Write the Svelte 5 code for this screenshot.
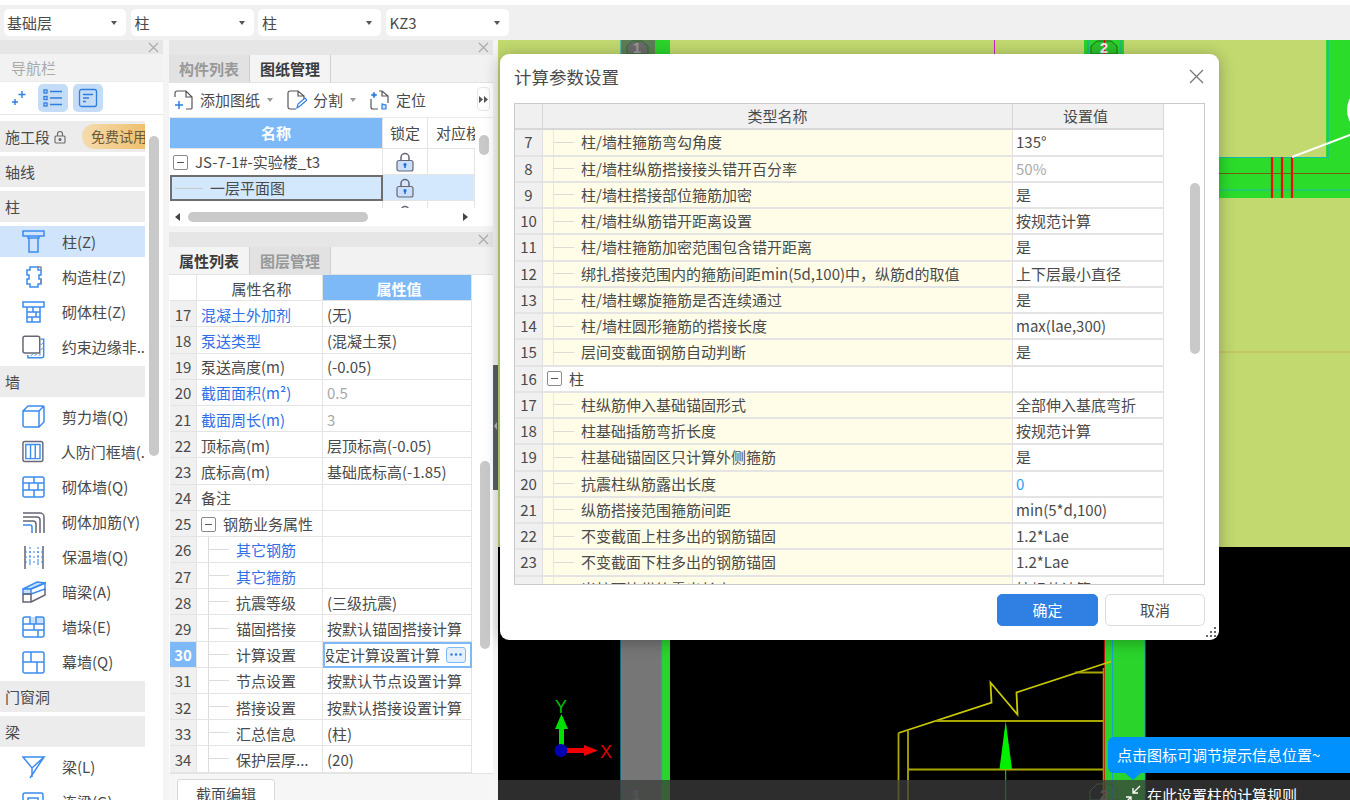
<script>
	const selects = ['基础层', '柱', '柱', 'KZ3'];

	const navItems = [
		{ kind: 'group', label: '施工段', trial: true },
		{ kind: 'group', label: '轴线' },
		{ kind: 'group', label: '柱' },
		{ label: '柱(Z)', icon: 'col', active: true },
		{ label: '构造柱(Z)', icon: 'gz' },
		{ label: '砌体柱(Z)', icon: 'qt' },
		{ label: '约束边缘非..', icon: 'ys' },
		{ kind: 'group', label: '墙' },
		{ label: '剪力墙(Q)', icon: 'jl' },
		{ label: '人防门框墙(.', icon: 'rf' },
		{ label: '砌体墙(Q)', icon: 'brick' },
		{ label: '砌体加筋(Y)', icon: 'jj' },
		{ label: '保温墙(Q)', icon: 'bw' },
		{ label: '暗梁(A)', icon: 'al' },
		{ label: '墙垛(E)', icon: 'qd' },
		{ label: '幕墙(Q)', icon: 'mq' },
		{ kind: 'group', label: '门窗洞' },
		{ kind: 'group', label: '梁' },
		{ label: '梁(L)', icon: 'beam' },
		{ label: '连梁(G)', icon: 'll' }
	];

	const props = [
		{ n: 17, name: '混凝土外加剂', value: '(无)', link: true },
		{ n: 18, name: '泵送类型', value: '(混凝土泵)', link: true },
		{ n: 19, name: '泵送高度(m)', value: '(-0.05)' },
		{ n: 20, name: '截面面积(m²)', value: '0.5', link: true, muted: true },
		{ n: 21, name: '截面周长(m)', value: '3', link: true, muted: true },
		{ n: 22, name: '顶标高(m)', value: '层顶标高(-0.05)' },
		{ n: 23, name: '底标高(m)', value: '基础底标高(-1.85)' },
		{ n: 24, name: '备注', value: '' },
		{ n: 25, name: '钢筋业务属性', value: '', root: true },
		{ n: 26, name: '其它钢筋', value: '', child: true, link: true },
		{ n: 27, name: '其它箍筋', value: '', child: true, link: true },
		{ n: 28, name: '抗震等级', value: '(三级抗震)', child: true },
		{ n: 29, name: '锚固搭接', value: '按默认锚固搭接计算', child: true },
		{ n: 30, name: '计算设置', value: '按设定计算设置计算', child: true, editing: true },
		{ n: 31, name: '节点设置', value: '按默认节点设置计算', child: true },
		{ n: 32, name: '搭接设置', value: '按默认搭接设置计算', child: true },
		{ n: 33, name: '汇总信息', value: '(柱)', child: true },
		{ n: 34, name: '保护层厚...', value: '(20)', child: true }
	];

	const params = [
		{ n: 7, name: '柱/墙柱箍筋弯勾角度', value: '135°' },
		{ n: 8, name: '柱/墙柱纵筋搭接接头错开百分率', value: '50%', tone: 'muted' },
		{ n: 9, name: '柱/墙柱搭接部位箍筋加密', value: '是' },
		{ n: 10, name: '柱/墙柱纵筋错开距离设置', value: '按规范计算' },
		{ n: 11, name: '柱/墙柱箍筋加密范围包含错开距离', value: '是' },
		{ n: 12, name: '绑扎搭接范围内的箍筋间距min(5d,100)中，纵筋d的取值', value: '上下层最小直径' },
		{ n: 13, name: '柱/墙柱螺旋箍筋是否连续通过', value: '是' },
		{ n: 14, name: '柱/墙柱圆形箍筋的搭接长度', value: 'max(lae,300)' },
		{ n: 15, name: '层间变截面钢筋自动判断', value: '是' },
		{ n: 16, name: '柱', value: '', section: true },
		{ n: 17, name: '柱纵筋伸入基础锚固形式', value: '全部伸入基底弯折' },
		{ n: 18, name: '柱基础插筋弯折长度', value: '按规范计算' },
		{ n: 19, name: '柱基础锚固区只计算外侧箍筋', value: '是' },
		{ n: 20, name: '抗震柱纵筋露出长度', value: '0', tone: 'blue' },
		{ n: 21, name: '纵筋搭接范围箍筋间距', value: 'min(5*d,100)' },
		{ n: 22, name: '不变截面上柱多出的钢筋锚固', value: '1.2*Lae' },
		{ n: 23, name: '不变截面下柱多出的钢筋锚固', value: '1.2*Lae' },
		{ n: 24, name: '当柱顶比纵筋露出长度', value: '按规范计算' }
	];
</script>

{#snippet lock()}
	<svg class="lock" width="18" height="20" viewBox="0 0 18 20">
		<path d="M5 9V5.500a4 4 0 0 1 8 0V9" fill="none" stroke="#667" stroke-width="1.500" />
		<rect x="1" y="8.500" width="16" height="10.500" rx="2" fill="#c9dffa" stroke="#667" stroke-width="1.200" />
		<circle cx="9" cy="12.500" r="1.600" fill="#1f6fd8" />
		<path d="M9 13v3" stroke="#1f6fd8" stroke-width="1.600" />
	</svg>
{/snippet}

{#snippet navIcon(name)}
	<svg width="24" height="24" viewBox="0 0 24 24" fill="none" stroke="#3b8cf0" stroke-width="1.500">
		{#if name === 'col'}
			<path d="M1 1h21v5H1z M6 6h11v2H6z M7 8v14h9V8" />
		{:else if name === 'gz'}
			<path d="M8 2h8v3h3v5h-2v4h2v5h-3v3H8v-3H5v-5h2v-4H5V5h3z" />
			<path d="M15 2h4v4M19 14v5" stroke="#889" />
		{:else if name === 'qt'}
			<path d="M1 2h21v5H1z M5 7v15h13V7 M5 12h13 M5 17h13 M11 7v5 M14 12v5 M10 17v5" />
		{:else if name === 'ys'}
			<path d="M18 18H3a2 2 0 0 1-2-2V3a2 2 0 0 1 2-2h13a2 2 0 0 1 2 2z" stroke="#667" />
			<path d="M19 4h3v17a2 2 0 0 1-2 2H6v-3" />
			<path d="M9 21l2-2M13 21l2-2M17 21l2-2M19 15l2-2M19 10l2-2" stroke-width="1" />
		{:else if name === 'jl'}
			<path d="M1 6h16v16H3a2 2 0 0 1-2-2z M1 6l5-5h15a1 1 0 0 1 1 1v15l-5 5 M17 6l5-5" />
		{:else if name === 'rf'}
			<rect x="1" y="1" width="21" height="21" rx="2" stroke="#667" />
			<path d="M4 4h15v15H4z M9 4v15 M14 4v15" />
		{:else if name === 'brick'}
			<rect x="1" y="2" width="21" height="20" rx="2" />
			<path d="M1 8h21 M1 15h21 M12 2v6 M7 8v7 M16 8v7 M12 15v7" />
		{:else if name === 'jj'}
			<path d="M1 3h17a4 4 0 0 1 4 4v16 M1 7h14a3 3 0 0 1 3 3v13 M1 11h10a3 3 0 0 1 3 3v9" stroke="#667" />
			<path d="M1 15h7a2 2 0 0 1 2 2v6" />
		{:else if name === 'bw'}
			<path d="M3 1v23 M21 1v23" stroke="#667" />
			<path d="M8 2v20 M16 2v20 M3 7h18 M3 12h18 M3 17h18" stroke-dasharray="2 2" stroke-width="1.100" />
		{:else if name === 'al'}
			<path d="M1 9l14-7 8 1-14 6z" fill="#c9dffa" />
			<path d="M1 9h8v5H1z" fill="#c9dffa" />
			<path d="M9 9l14-6v6L9 14" />
			<path d="M1 14v8h8v-8 M9 22l14-7V9 M1 14h8" stroke="#667" />
		{:else if name === 'qd'}
			<path d="M9 2h13v7H9z" fill="#c9dffa" stroke="none" />
			<path d="M1 4a2 2 0 0 1 2-2h5v7h6V2h6a2 2 0 0 1 2 2v16a2 2 0 0 1-2 2H3a2 2 0 0 1-2-2z M1 9h21 M1 15h21 M12 9v6 M16 15v7" />
		{:else if name === 'mq'}
			<rect x="1" y="2" width="21" height="21" rx="2" />
			<path d="M1 12h21 M9 2v10 M15 12v11" />
		{:else if name === 'beam'}
			<path d="M1 2h21L10 13z M22 2L8 23 M10 13v9" />
		{:else if name === 'll'}
			<rect x="1" y="3" width="20" height="20" rx="2" />
			<rect x="6" y="8" width="10" height="10" />
		{/if}
	</svg>
{/snippet}

{#snippet panelHead()}
	<div class="panel-head">
		<svg width="11" height="11" viewBox="0 0 11 11"><path d="M1 1l9 9M10 1l-9 9" stroke="#aaa" stroke-width="1.200" /></svg>
	</div>
{/snippet}

{#snippet expander()}
	<span class="expander"></span>
{/snippet}

<div class="app">
	<div class="topbar">
		{#each selects as item}
			<div class="select">
				<span>{item}</span>
				<i class="caret"></i>
			</div>
		{/each}
	</div>

	<div class="workspace">
		<aside class="nav">
			{@render panelHead()}
			<div class="nav-title">导航栏</div>
			<div class="nav-tools">
				<svg class="sparkle" width="18" height="18" viewBox="0 0 18 18" fill="none" stroke="#2f7de0" stroke-width="1.400">
					<path d="M12 2v7M8.500 5.500h7M5 10v6M2 13h6" />
				</svg>
				<span class="tool-btn">
					<svg width="20" height="20" viewBox="0 0 20 20" fill="none" stroke="#2f7de0" stroke-width="1.300">
						<rect x="1" y="2" width="3" height="3" /><rect x="1" y="8.500" width="3" height="3" /><rect x="1" y="15" width="3" height="3" />
						<path d="M7 3.500h12M7 10h12M7 16.500h12" />
					</svg>
				</span>
				<span class="tool-btn">
					<svg width="20" height="20" viewBox="0 0 20 20" fill="none" stroke="#2f7de0" stroke-width="1.300">
						<rect x="1.500" y="1.500" width="17" height="17" rx="2" />
						<path d="M5 6.500h10M5 10h6M5 13.500h3" />
					</svg>
				</span>
			</div>
			<div class="nav-list">
				{#each navItems as item}
					{#if item.kind === 'group'}
						<div class="nav-group">
							<span>{item.label}</span>
							{#if item.trial}
								<svg class="trial-lock" width="12" height="14" viewBox="0 0 12 14" fill="none" stroke="#666" stroke-width="1.100">
									<path d="M3.500 6V4a2.500 2.500 0 0 1 5 0v2" />
									<rect x="1" y="6" width="10" height="7" rx="1" />
									<circle cx="6" cy="9.500" r="1" fill="#666" />
								</svg>
								<span class="trial">免费试用</span>
							{/if}
						</div>
					{:else}
						<div class="nav-item" class:active={item.active}>
							{@render navIcon(item.icon)}
							<span>{item.label}</span>
						</div>
					{/if}
				{/each}
				<div class="nav-scroll"></div>
			</div>
		</aside>

		<section class="middle">
			<div class="panel drawings">
				{@render panelHead()}
				<div class="tabs">
					<span class="tab">构件列表</span>
					<span class="tab current">图纸管理</span>
				</div>
				<div class="toolbar">
					<svg width="20" height="20" viewBox="0 0 20 20" fill="none" stroke="#555" stroke-width="1.200">
						<path d="M1 7V3a2 2 0 0 1 2-2h9l6 6v11a1 1 0 0 1-1 1h-5 M12 1v6h6 M7 1h3" />
						<path d="M5 11v8M1 15h8" stroke="#2f7de0" stroke-width="1.500" />
					</svg>
					<span class="tool-label">添加图纸</span>
					<i class="caret small"></i>
					<svg class="gap" width="20" height="20" viewBox="0 0 20 20" fill="none" stroke="#555" stroke-width="1.200">
						<path d="M9 19H3a2 2 0 0 1-2-2V3a2 2 0 0 1 2-2h8l6 5v3 M11 1v5h6" />
						<path d="M10 18l1-4 7-6 2 2-7 6z" stroke="#2f7de0" />
					</svg>
					<span class="tool-label">分割</span>
					<i class="caret small"></i>
					<svg class="gap" width="20" height="20" viewBox="0 0 20 20" fill="none" stroke="#555" stroke-width="1.200">
						<path d="M1 9v8a2 2 0 0 0 2 2h5 M9 1h3l6 5v7 M12 1v5h6" />
						<path d="M4 2l1 2 2 1-2 1-1 2-1-2-2-1 2-1z" fill="#2f7de0" stroke="#2f7de0" stroke-width=".6" />
						<path d="M12 19v-5l4 1v4z" fill="#c9dffa" stroke="#2f7de0" />
					</svg>
					<span class="tool-label">定位</span>
					<span class="more">
						<svg width="9" height="7" viewBox="0 0 9 7" fill="#555"><path d="M0 0l4 3.500L0 7zM5 0l4 3.500L5 7z" /></svg>
					</span>
				</div>
				<div class="drawing-table">
					<div class="dt-row dt-head">
						<div class="dt-name head-on">名称</div>
						<div class="dt-lock">锁定</div>
						<div class="dt-floor">对应楼</div>
					</div>
					<div class="dt-row first">
						<div class="dt-name">{@render expander()}<span class="dt-text">JS-7-1#-实验楼_t3</span></div>
						<div class="dt-lock">{@render lock()}</div>
						<div class="dt-floor"></div>
					</div>
					<div class="dt-row selected">
						<div class="dt-name"><span class="dash"></span><span>一层平面图</span></div>
						<div class="dt-lock">{@render lock()}</div>
						<div class="dt-floor"></div>
					</div>
					<div class="dt-row peek">
						<div class="dt-name"></div>
						<div class="dt-lock">{@render lock()}</div>
						<div class="dt-floor"></div>
					</div>
					<div class="vthumb"></div>
				</div>
				<div class="hscroll">
					<i class="arrow left"></i>
					<span class="hthumb"></span>
					<i class="arrow right"></i>
				</div>
			</div>

			<div class="panel properties">
				{@render panelHead()}
				<div class="tabs">
					<span class="tab current">属性列表</span>
					<span class="tab">图层管理</span>
				</div>
				<div class="prop-wrap">
					<div class="prop-row prop-head">
						<div class="prop-num"></div>
						<div class="prop-name">属性名称</div>
						<div class="prop-value head-on">属性值</div>
					</div>
					{#each props as row}
						<div class="prop-row">
							<div class="prop-num" class:on={row.editing}>{row.n}</div>
							<div class="prop-name" class:link={row.link} class:child={row.child}>
								{#if row.root}
									{@render expander()}<span class="root-label">{row.name}</span>
								{:else}
									{#if row.child}<span class="guide"></span>{/if}
									{row.name}
								{/if}
							</div>
							<div class="prop-value" class:muted={row.muted} class:editing={row.editing}>
								{#if row.editing}
									<span class="edit-text">{row.value}</span>
									<span class="dots">
										<svg width="12" height="3" viewBox="0 0 12 3" fill="#2f7de0">
											<circle cx="1.500" cy="1.500" r="1.200" /><circle cx="6" cy="1.500" r="1.200" /><circle cx="10.500" cy="1.500" r="1.200" />
										</svg>
									</span>
								{:else}
									{row.value}
								{/if}
							</div>
						</div>
					{/each}
					<div class="prop-scroll"></div>
				</div>
				<div class="prop-foot"><span class="section-btn">截面编辑</span></div>
			</div>
		</section>

		<div class="gutter"><span class="grip"></span></div>

		<main class="canvas">
			<svg class="drawing" width="852" height="760" viewBox="498 40 852 760">
				<rect x="498" y="40" width="852" height="507" fill="#c1d96f" />
				<rect x="498" y="547" width="852" height="253" fill="#000" />

				<!-- axis 1 column -->
				<rect x="621" y="40" width="41" height="15" fill="#5e7d55" />
				<rect x="655" y="40" width="15" height="15" fill="#2bd42b" />
				<rect x="621" y="640" width="41" height="160" fill="#767676" />
				<rect x="662" y="640" width="8" height="160" fill="#2bd42b" />
				<path d="M621 40v15M621 640v160M661.500 640v160" stroke="#1aa3c8" stroke-width="1.200" />
				<polygon points="627,54 627,46 632,41 642,41 648,46 648,54" fill="#6b6b6b" stroke="#2c6e2c" />
				<text x="637" y="53" class="axis-no">1</text>
				<polygon points="622,800 622,791 629,784 643,784 650,791 650,800" fill="none" stroke="#3f8f3f" />
				<text x="636" y="800" class="axis-no">1</text>

				<!-- axis 2 column -->
				<rect x="1084" y="40" width="40" height="15" fill="#2bd42b" />
				<path d="M1088 40v15M1121 40v15" stroke="#1aa3c8" />
				<polygon points="1091,54 1091,46 1097,41 1111,41 1117,46 1117,54" fill="#2bc02b" stroke="#1d6e1d" />
				<path d="M1104.500 40v14" stroke="#d01010" />
				<text x="1104" y="53" class="axis-no light">2</text>
				<rect x="1105" y="640" width="40" height="160" fill="#2bd42b" />
				<path d="M1104.500 640v160" stroke="#c01010" />
				<path d="M1112.500 640v160M1145 640v160" stroke="#1aa3c8" />
				<polygon points="1090,800 1090,791 1097,784 1111,784 1118,791 1118,800" fill="none" stroke="#3f8f3f" />
				<text x="1104" y="800" class="axis-no">2</text>

				<!-- magenta reference -->
				<path d="M994.500 40v14" stroke="#d020c0" />

				<!-- top right wall -->
				<rect x="1326" y="40" width="24" height="158" fill="#2bdc2b" />
				<rect x="1219" y="157" width="131" height="41" fill="#2bdc2b" />
				<path d="M1219 157.500h110M1328 40v118M1219 190h131" stroke="#17b8b0" stroke-width="1.200" />
				<path d="M1219 173.500h131" stroke="#7a5a10" stroke-width="1.200" />
				<path d="M1272 157v41M1282 157v41M1292 157v41" stroke="#e81010" stroke-width="2.200" />
				<path d="M1292 157l58-22" stroke="#fff" stroke-width="2" />
				<circle cx="1371" cy="110" r="24" fill="#fff" />
				<path d="M1219 352h131" stroke="#c9a85a" stroke-width=".8" />

				<!-- bracket detail -->
				<path d="M898.500 733L991.500 702.500 990.500 682.500 1017.500 714.500 1016.500 692.500 1111 661.500" fill="none" stroke="#c8c800" stroke-width="1.800" />
				<path d="M935 721h168M1075 672.500h28M908 769.500h195M898.500 733v67M908 731v69" fill="none" stroke="#a8a800" stroke-width="1.800" />
				<path d="M1103.500 668v132" stroke="#a89000" stroke-width="1.500" />
				<polygon points="1005.700,721 999.500,769 1012,769" fill="#00f000" />
				<path d="M1005.700 769v31" stroke="#00f000" />

				<!-- coordinate axes -->
				<rect x="559" y="727" width="5" height="20" fill="#00e000" />
				<polygon points="561.500,714 555,729 568,729" fill="#00e000" />
				<rect x="567" y="748" width="19" height="5" fill="#f00000" />
				<polygon points="584,745 598,750.500 584,756" fill="#f00000" />
				<circle cx="561" cy="750.500" r="6.500" fill="#0000b0" />
				<text x="561" y="713" class="axis-letter" fill="#00c000">Y</text>
				<text x="606" y="758" class="axis-letter" fill="#e00000">X</text>
			</svg>

			<div class="status">
				<svg class="status-icon" width="20" height="20" viewBox="0 0 20 20" fill="none" stroke="#fff" stroke-width="1.300">
					<path d="M18 1l-7 7M11 3v5h5M2 19l7-7M4 12h5v5" />
				</svg>
				<span class="status-text">在此设置柱的计算规则</span>
			</div>
			<div class="hint">点击图标可调节提示信息位置~</div>
		</main>
	</div>

	<div class="dialog">
		<div class="dialog-head">
			<span>计算参数设置</span>
			<svg width="15" height="15" viewBox="0 0 15 15"><path d="M1 1l13 13M14 1L1 14" stroke="#777" stroke-width="1.300" /></svg>
		</div>
		<div class="param-wrap">
			<div class="param-row param-head">
				<div class="param-num"></div>
				<div class="param-name center">类型名称</div>
				<div class="param-value center">设置值</div>
			</div>
			{#each params as row}
				<div class="param-row">
					<div class="param-num">{row.n}</div>
					<div class="param-name" class:section={row.section}>
						{#if row.section}
							{@render expander()}<span class="section-label">{row.name}</span>
						{:else}
							<span class="param-guide"></span><span>{row.name}</span>
						{/if}
					</div>
					<div class="param-value {row.tone ?? ''}">{row.value}</div>
				</div>
			{/each}
			<div class="param-scroll"></div>
		</div>
		<div class="dialog-foot">
			<span class="btn primary">确定</span>
			<span class="btn">取消</span>
		</div>
		<svg class="resize" width="11" height="11" viewBox="0 0 11 11" fill="#666">
			<rect x="8" y="0" width="2" height="2" /><rect x="4" y="4" width="2" height="2" /><rect x="8" y="4" width="2" height="2" />
			<rect x="0" y="8" width="2" height="2" /><rect x="4" y="8" width="2" height="2" /><rect x="8" y="8" width="2" height="2" />
		</svg>
	</div>
</div>

<style>
	:global(body) {
		margin: 0;
		font-family: "Noto Sans CJK SC", "Liberation Sans", sans-serif;
		color: #4a4a4a;
	}

	.app {
		position: relative;
		width: 1350px;
		height: 800px;
		overflow: hidden;
		background: #f4f4f4;
		font-size: 15px;
		line-height: 20px;
	}

	.topbar {
		display: flex;
		gap: 4.500px;
		height: 40px;
		box-sizing: border-box;
		padding: 4px 0 0 4px;
		border-top: 5px solid #fff;
		background: #f0f0f0;
	}

	.select {
		display: flex;
		align-items: center;
		justify-content: space-between;
		width: 123px;
		height: 27px;
		box-sizing: border-box;
		padding: 0 9px 0 4px;
		background: #fff;
		border-radius: 5px;
	}

	.select:first-child {
		width: 122px;
		padding-left: 3px;
	}

	.caret {
		width: 0;
		height: 0;
		border-left: 3.500px solid transparent;
		border-right: 3.500px solid transparent;
		border-top: 4px solid #555;
	}

	.caret.small {
		margin-left: 7px;
		border-top-color: #999;
	}

	.workspace {
		display: flex;
		height: 760px;
	}

	.nav {
		display: flex;
		flex-direction: column;
		width: 163px;
		margin-right: 6px;
		background: #fff;
	}

	.panel-head {
		display: flex;
		align-items: center;
		justify-content: flex-end;
		flex: none;
		height: 14px;
		padding-right: 4px;
		background: #e6e6e6;
	}

	.nav-title {
		flex: none;
		height: 27px;
		padding-left: 11px;
		background: #f2f2f2;
		color: #aaa;
		line-height: 27px;
	}

	.nav-tools {
		display: flex;
		align-items: center;
		flex: none;
		gap: 5px;
		height: 34px;
		padding-left: 10px;
		border-top: 1px solid #ececec;
		border-bottom: 1px solid #e6e6e6;
		box-sizing: border-box;
	}

	.sparkle {
		margin-right: 5px;
	}

	.tool-btn {
		display: flex;
		align-items: center;
		justify-content: center;
		width: 30px;
		height: 28px;
		border-radius: 5px;
		background: #c4dcf6;
	}

	.nav-list {
		position: relative;
		flex: 1;
		display: flex;
		flex-direction: column;
		gap: 4px;
		padding-top: 6px;
		overflow: hidden;
	}

	.nav-group,
	.nav-item {
		display: flex;
		align-items: center;
		flex: none;
		width: 145px;
		height: 31px;
		white-space: nowrap;
		overflow: hidden;
	}

	.nav-group {
		gap: 4px;
		padding-left: 5px;
		box-sizing: border-box;
		background: #ececec;
	}

	.trial-lock {
		flex: none;
	}

	.trial {
		margin-left: 12px;
		padding-left: 9px;
		width: 63px;
		flex: none;
		height: 25px;
		line-height: 25px;
		font-size: 14px;
		color: #6b5a3a;
		background: linear-gradient(90deg, #f5dcae, #efc06e);
		border-radius: 12px 0 0 12px;
		box-sizing: border-box;
		overflow: hidden;
	}

	.nav-item {
		gap: 16px;
		padding-left: 22px;
		box-sizing: border-box;
	}

	.nav-item.active {
		background: #d0e5fb;
	}

	.nav-scroll {
		position: absolute;
		left: 149px;
		top: 21px;
		width: 10px;
		height: 320px;
		border-radius: 5px;
		background: #c9c9c9;
	}

	.middle {
		display: flex;
		flex-direction: column;
		gap: 6px;
		width: 324px;
		flex: none;
	}

	.panel {
		background: #fff;
		display: flex;
		flex-direction: column;
	}

	.panel .panel-head {
		height: 15px;
		padding-right: 4px;
	}

	.tabs {
		display: flex;
		flex: none;
		height: 28px;
		box-sizing: border-box;
		background: #f2f2f2;
		border-bottom: 1px solid #e2e2e2;
	}

	.tab {
		width: 81px;
		box-sizing: border-box;
		text-align: center;
		line-height: 27px;
		font-weight: 700;
		color: #999;
		background: #e2e2e2;
		border-right: 1px solid #cfcfcf;
	}

	.tab.current {
		color: #3c3c3c;
		background: #f4f4f4;
	}

	.toolbar {
		display: flex;
		align-items: center;
		flex: none;
		height: 35px;
		padding-left: 5px;
		position: relative;
		border-bottom: 1px solid #eaeaea;
		box-sizing: border-box;
	}

	.tool-label {
		margin-left: 6px;
	}

	.toolbar .gap {
		margin-left: 14px;
	}

	.more {
		position: absolute;
		left: 308px;
		top: 4px;
		display: flex;
		align-items: center;
		justify-content: center;
		width: 13px;
		height: 24px;
		border: 1px solid #e6e6e6;
		border-radius: 4px;
		box-sizing: border-box;
	}

	.drawing-table {
		position: relative;
		height: 90px;
		overflow: hidden;
		padding-left: 1px;
	}

	.dt-row {
		display: grid;
		grid-template-columns: 213px 45px 47px;
		width: 305px;
		overflow: hidden;
	}

	.dt-row > div {
		display: flex;
		align-items: center;
		box-sizing: border-box;
		border-right: 1px solid #e4e4e4;
		border-bottom: 1px solid #e4e4e4;
		white-space: nowrap;
		overflow: hidden;
	}

	.dt-head {
		height: 31px;
	}

	.dt-head > div {
		justify-content: center;
	}

	.dt-head > div.dt-floor {
		justify-content: flex-start;
		padding-left: 8px;
		border-right: 0;
	}

	.head-on {
		background: #7db8f7;
		color: #fff;
		font-weight: 700;
	}

	.first {
		height: 26px;
	}

	.first .dt-name {
		padding-left: 3px;
		border-right: 1px solid #e4e4e4;
		border-bottom: 0;
	}

	.dt-text {
		margin-left: 7px;
	}

	.dt-lock {
		justify-content: center;
	}

	.selected {
		height: 26px;
	}

	.selected > div {
		background: #d3e8fd;
	}

	.selected .dt-name {
		border: 2px solid #6e6e6e;
		padding-left: 3px;
	}

	.dash {
		width: 28px;
		height: 1px;
		margin-right: 7px;
		background: #c8c8c8;
	}

	.peek {
		height: 16px;
	}

	.peek > div.dt-lock {
		align-items: flex-start;
		padding-top: 4px;
	}

	.vthumb {
		position: absolute;
		left: 310px;
		top: 17px;
		width: 10px;
		height: 20px;
		border-radius: 5px;
		background: #c9c9c9;
	}

	.hscroll {
		position: relative;
		height: 18px;
		display: flex;
		align-items: center;
		padding-left: 6px;
	}

	.hthumb {
		width: 180px;
		height: 10px;
		margin-left: 8px;
		border-radius: 5px;
		background: #c9c9c9;
	}

	.arrow {
		width: 0;
		height: 0;
		border-top: 4px solid transparent;
		border-bottom: 4px solid transparent;
	}

	.arrow.left {
		border-right: 5px solid #444;
	}

	.arrow.right {
		position: absolute;
		left: 294px;
		border-left: 5px solid #444;
	}

	.expander {
		position: relative;
		display: inline-block;
		flex: none;
		width: 15px;
		height: 15px;
		box-sizing: border-box;
		border: 1px solid #8a8a8a;
		border-radius: 2px;
		background: #fff;
	}

	.expander::after {
		content: '';
		position: absolute;
		left: 3px;
		right: 3px;
		top: 6px;
		height: 1px;
		background: #555;
	}

	.properties {
		flex: 1;
		min-height: 0;
		overflow: hidden;
	}

	.prop-wrap {
		position: relative;
		flex: none;
		padding-left: 1px;
		height: 498px;
		overflow: hidden;
	}

	.prop-row {
		display: grid;
		grid-template-columns: 27px 126px 149px;
		height: 26.200px;
		width: 302px;
	}

	.prop-row > div {
		display: flex;
		align-items: center;
		box-sizing: border-box;
		padding-top: 2px;
		border-right: 1px solid #e4e4e4;
		border-bottom: 1px solid #e4e4e4;
		white-space: nowrap;
		overflow: hidden;
	}

	.prop-head > div {
		justify-content: center;
	}

	.prop-num {
		justify-content: center;
		background: #f0f0f0;
	}

	.prop-head .prop-num {
		background: #fff;
	}

	.prop-num.on {
		background: #7db8f7;
		color: #fff;
		font-weight: 700;
	}

	.prop-name {
		position: relative;
		padding-left: 4px;
	}

	.prop-name.child {
		padding-left: 39px;
	}

	.prop-name.link {
		color: #2f6fe8;
	}

	.guide {
		position: absolute;
		left: 11px;
		top: 0;
		bottom: 0;
		width: 20px;
		border-left: 1px solid #dcdcdc;
		background: linear-gradient(#dcdcdc, #dcdcdc) no-repeat 0 50% / 100% 1px;
	}

	.root-label {
		margin-left: 7px;
	}

	.prop-value {
		padding-left: 4px;
	}

	.prop-value.muted {
		color: #a8a8a8;
	}

	.prop-value.editing {
		position: relative;
		outline: 2px solid #7db8f7;
		outline-offset: -2px;
		padding-left: 3px;
	}

	.edit-text {
		display: block;
		width: 114px;
		flex: none;
		overflow: hidden;
		direction: rtl;
		white-space: nowrap;
	}

	.dots {
		position: absolute;
		right: 5px;
		top: 5px;
		display: flex;
		align-items: center;
		justify-content: center;
		width: 20px;
		height: 16px;
		box-sizing: border-box;
		border: 1px solid #7db8f7;
		border-radius: 3px;
		background: #e4f0fd;
	}

	.prop-scroll {
		position: absolute;
		left: 311px;
		top: 186px;
		width: 10px;
		height: 188px;
		border-radius: 5px;
		background: #c9c9c9;
	}

	.prop-foot {
		padding: 5px 0 0 8px;
		border-top: 1px solid #e4e4e4;
		background: #f6f6f6;
		flex: 1;
	}

	.section-btn {
		display: block;
		width: 98px;
		height: 30px;
		box-sizing: border-box;
		border: 1px solid #d8d8d8;
		border-radius: 3px;
		background: #fff;
		text-align: center;
		line-height: 28px;
	}

	.gutter {
		position: relative;
		width: 5px;
		flex: none;
		background: #f4f4f4;
	}

	.grip {
		position: absolute;
		left: 0;
		top: 325px;
		width: 5px;
		height: 125px;
		background: #5a5f66;
	}

	.grip::after {
		content: '';
		position: absolute;
		left: 1px;
		top: 57px;
		border-top: 4px solid transparent;
		border-bottom: 4px solid transparent;
		border-right: 3px solid #b5b8bc;
	}

	.canvas {
		position: relative;
		flex: 1;
		overflow: hidden;
	}

	.drawing {
		display: block;
	}

	.axis-no {
		font: 700 15px "Liberation Sans", sans-serif;
		fill: #999;
		text-anchor: middle;
	}

	.axis-no.light {
		fill: #eee;
	}

	.axis-letter {
		font: 18px "Liberation Sans", sans-serif;
		text-anchor: middle;
	}

	.status {
		position: absolute;
		left: 0;
		right: 0;
		bottom: 0;
		height: 20px;
		background: rgba(60, 60, 60, .75);
	}

	.status-icon {
		position: absolute;
		left: 624px;
		top: 5px;
	}

	.status-text {
		position: absolute;
		left: 649px;
		top: 5px;
		color: #fff;
		white-space: nowrap;
	}

	.hint {
		position: absolute;
		left: 610px;
		top: 697px;
		right: 0;
		height: 36px;
		padding-left: 9px;
		background: #0091ff;
		border-radius: 6px 0 0 6px;
		color: #fff;
		line-height: 36px;
	}

	.hint::after {
		content: '';
		position: absolute;
		left: 17px;
		top: 36px;
		border-left: 8px solid transparent;
		border-right: 8px solid transparent;
		border-top: 7px solid #0091ff;
	}

	.dialog {
		position: absolute;
		left: 500px;
		top: 54px;
		width: 719px;
		height: 586px;
		box-sizing: border-box;
		padding: 0 14px;
		background: #fff;
		border-radius: 9px;
		box-shadow: 0 2px 16px rgba(0, 0, 0, .3);
	}

	.dialog-head {
		display: flex;
		align-items: center;
		justify-content: space-between;
		height: 49px;
		box-sizing: border-box;
		padding: 0 1px 4px 0;
		font-size: 17.500px;
	}

	.param-wrap {
		position: relative;
		width: 691px;
		height: 482px;
		box-sizing: border-box;
		border: 1px solid #c9c9c9;
		overflow: hidden;
	}

	.param-row {
		display: grid;
		grid-template-columns: 28px 470px 151px;
		height: 26.250px;
		width: 649px;
	}

	.param-row > div {
		display: flex;
		align-items: center;
		box-sizing: border-box;
		border-right: 1px solid #e0e0e0;
		border-bottom: 2px solid #e4e4e4;
		white-space: nowrap;
		overflow: hidden;
	}

	.param-head > div {
		background: #f0f0f0;
		border-color: #d8d8d8;
	}

	.param-num {
		justify-content: center;
		background: #f0f0f0;
	}

	.param-name {
		background: #fffde8;
	}

	.param-name.section {
		padding-left: 4px;
		background: #fff;
	}

	.section-label {
		margin-left: 7px;
	}

	.param-row > div.center {
		justify-content: center;
	}

	.param-head .param-value {
		padding: 0 5px 0 0;
	}

	.param-guide {
		display: block;
		align-self: stretch;
		width: 20px;
		margin: 0 7px 0 10px;
		flex: none;
		border-left: 1px solid #e8e8e0;
		background: linear-gradient(#dcdcd4, #dcdcd4) no-repeat 0 50% / 100% 1px;
	}

	.param-value {
		padding-left: 3px;
	}

	.param-value.muted {
		color: #aaa;
	}

	.param-value.blue {
		color: #2a9df4;
	}

	.param-scroll {
		position: absolute;
		left: 675px;
		top: 79px;
		width: 10px;
		height: 171px;
		border-radius: 5px;
		background: #c9c9c9;
	}

	.dialog-foot {
		display: flex;
		justify-content: flex-end;
		gap: 7px;
		padding-top: 9px;
	}

	.btn {
		width: 100px;
		height: 32px;
		box-sizing: border-box;
		border: 1px solid #dcdcdc;
		border-radius: 5px;
		text-align: center;
		line-height: 30px;
	}

	.btn.primary {
		width: 101px;
		border-color: #2f80e2;
		background: #2f80e2;
		color: #fff;
	}

	.resize {
		position: absolute;
		right: 2px;
		bottom: 2px;
	}
</style>
